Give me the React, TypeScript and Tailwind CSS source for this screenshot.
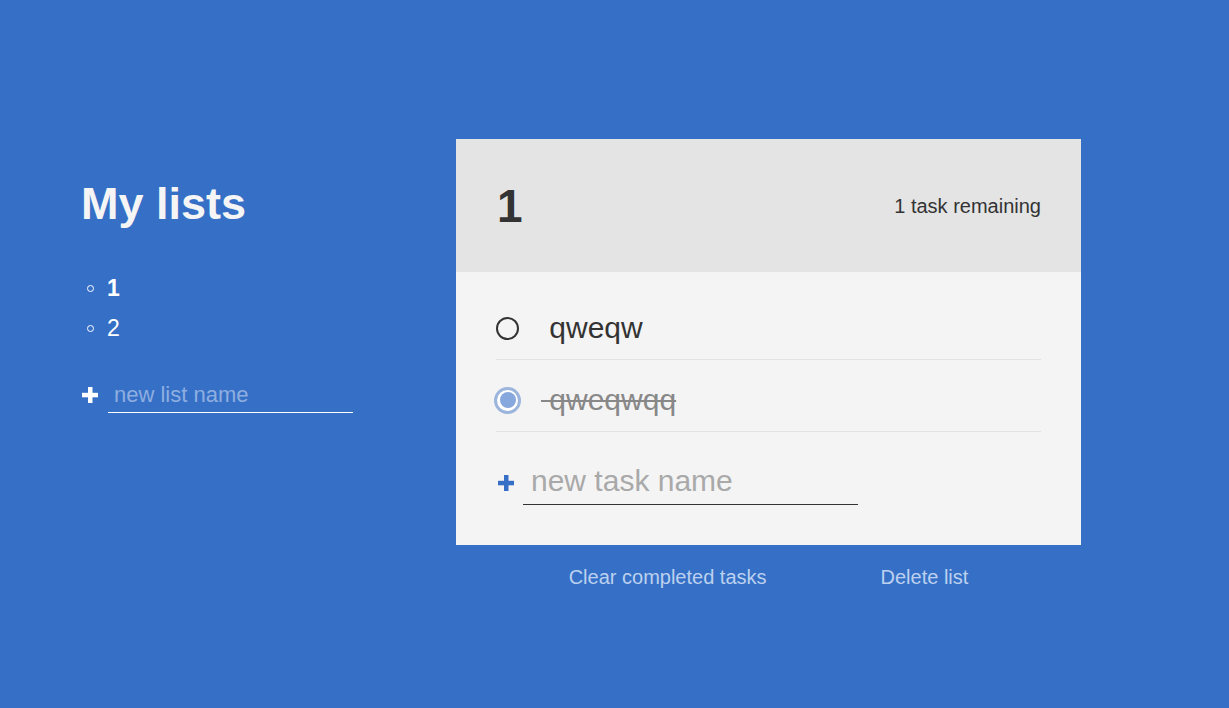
import { useState } from "react";

type Task = { id: number; name: string; done: boolean };

function PlusIcon({ className }: { className?: string }) {
  return (
    <svg viewBox="0 0 16 16" className={className} fill="currentColor">
      <rect x="6" y="0" width="4.5" height="16" />
      <rect x="0" y="5.8" width="16" height="4.5" />
    </svg>
  );
}

function TaskRow({ task }: { task: Task }) {
  return (
    <div className="flex h-[72px] items-center border-b border-[#e2e2e2] pt-[9px]">
      <div className="ml-[-2px] flex w-[27px] items-center justify-center">
        {task.done ? (
          <span className="flex h-[27px] w-[27px] items-center justify-center rounded-full border-[3px] border-[#9cb5dd] bg-white">
            <span className="h-[16px] w-[16px] rounded-full bg-[#86a8dd]" />
          </span>
        ) : (
          <span className="h-[23px] w-[23px] rounded-full border-2 border-[#333]" />
        )}
      </div>
      <span
        className={`ml-[20px] whitespace-pre text-[30px] leading-none ${
          task.done ? "text-[#888] line-through decoration-2" : "text-[#333]"
        }`}
      >
        {" " + task.name}
      </span>
    </div>
  );
}

export default function App() {
  const [tasks] = useState<Task[]>([
    { id: 1, name: "qweqw", done: false },
    { id: 2, name: "qweqwqq", done: true },
  ]);
  const remaining = tasks.filter((t) => !t.done).length;

  return (
    <div className="flex min-h-screen w-full bg-[#3670c6] pl-[80px] pt-[139px] font-['Liberation_Sans',Arial,sans-serif]">
      {/* Lists column */}
      <div className="w-[376px] shrink-0">
        <h1 className="ml-[1px] mt-[42px] text-[45px] font-bold leading-none text-[#f5f5f5]">My lists</h1>
        <ul className="mt-[42px]">
          {["1", "2"].map((name, i) => (
            <li key={name} className="flex h-[40px] items-center text-[23px] text-white">
              <span className="ml-[7px] h-[7px] w-[7px] rounded-full border border-white" />
              <span className={`ml-[13px] ${i === 0 ? "font-bold" : ""}`}>{name}</span>
            </li>
          ))}
        </ul>
        <div className="mt-[29px] flex items-center">
          <PlusIcon className="ml-[2px] h-[16px] w-[16px] text-white" />
          <input
            placeholder="new list name"
            className="ml-[10px] h-[36px] w-[245px] border-b border-white bg-transparent pl-[6px] text-[22px] text-white outline-none placeholder:text-[#8eaee0]"
          />
        </div>
      </div>

      {/* Selected list */}
      <div className="w-[625px] shrink-0">
        <div className="bg-[#f4f4f4]">
          <div className="flex h-[133px] items-center justify-between bg-[#e4e4e4] pl-[41px] pr-[40px]">
            <h2 className="text-[46px] font-bold leading-none text-[#333]">1</h2>
            <span className="text-[20px] text-[#333]">
              {remaining} task remaining
            </span>
          </div>
          <div className="px-[40px] pb-[40px] pt-[16px]">
            {tasks.map((t) => (
              <TaskRow key={t.id} task={t} />
            ))}
            <div className="mt-[29px] flex items-center">
              <PlusIcon className="ml-[2px] h-[16px] w-[16px] text-[#3670c6]" />
              <input
                placeholder="new task name"
                className="ml-[9px] h-[44px] w-[335px] border-b border-[#333] bg-transparent pb-[4px] pl-[8px] text-[30px] text-[#333] outline-none placeholder:text-[#a9a9a9]"
              />
            </div>
          </div>
        </div>
        <div className="mt-[20px] flex justify-center gap-[114px] text-[20px] leading-[24px] text-[#bcd0ef]">
          <button type="button">Clear completed tasks</button>
          <button type="button">Delete list</button>
        </div>
      </div>
    </div>
  );
}
